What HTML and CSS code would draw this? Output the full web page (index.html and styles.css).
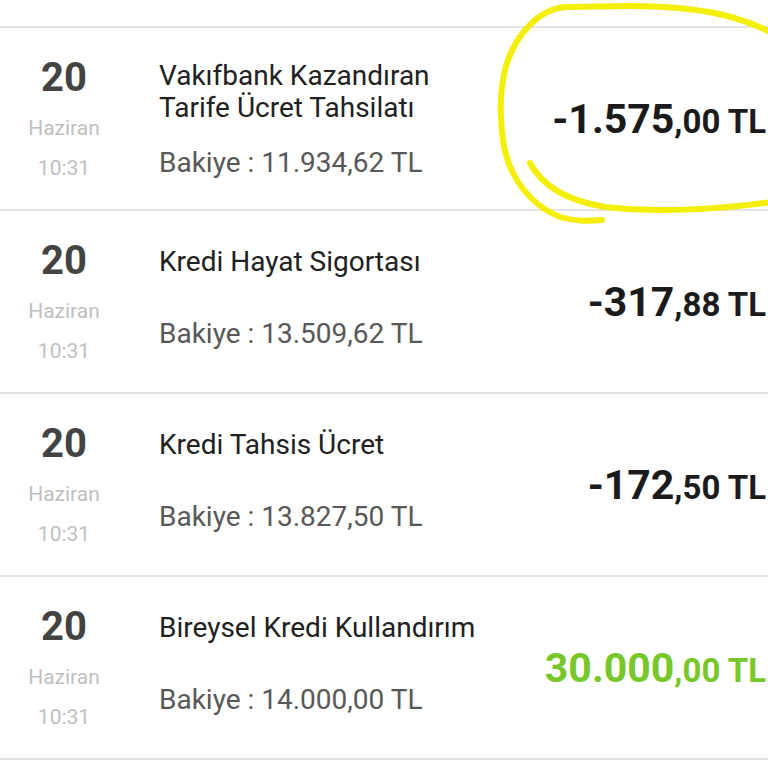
FILE: index.html
```html
<!DOCTYPE html>
<html>
<head>
    <title>Hesap Hareketleri</title>
    <link rel="stylesheet" href="styles.css">
</head>
<body>

<div class="list">
    <div class="row">
        <div class="date">
            <div class="day">20</div>
            <div class="month">Haziran</div>
            <div class="time">10:31</div>
        </div>
        <div class="info double">
            <div class="title">Vakıfbank Kazandıran<br>Tarife Ücret Tahsilatı</div>
            <div class="balance">Bakiye : 11.934,62 TL</div>
        </div>
        <div class="amount">-1.575<span class="cents">,00 TL</span></div>
    </div>

    <div class="row">
        <div class="date">
            <div class="day">20</div>
            <div class="month">Haziran</div>
            <div class="time">10:31</div>
        </div>
        <div class="info">
            <div class="title">Kredi Hayat Sigortası</div>
            <div class="balance">Bakiye : 13.509,62 TL</div>
        </div>
        <div class="amount">-317<span class="cents">,88 TL</span></div>
    </div>

    <div class="row">
        <div class="date">
            <div class="day">20</div>
            <div class="month">Haziran</div>
            <div class="time">10:31</div>
        </div>
        <div class="info">
            <div class="title">Kredi Tahsis Ücret</div>
            <div class="balance">Bakiye : 13.827,50 TL</div>
        </div>
        <div class="amount">-172<span class="cents">,50 TL</span></div>
    </div>

    <div class="row">
        <div class="date">
            <div class="day">20</div>
            <div class="month">Haziran</div>
            <div class="time">10:31</div>
        </div>
        <div class="info">
            <div class="title">Bireysel Kredi Kullandırım</div>
            <div class="balance">Bakiye : 14.000,00 TL</div>
        </div>
        <div class="amount income">30.000<span class="cents">,00 TL</span></div>
    </div>
</div>

<!-- hand-drawn highlight over the first amount -->
<svg class="scribble" width="768" height="240" viewBox="0 0 768 240">
    <path d="M 778 36 C 745 18, 705 6, 630 6 L 565 7 C 540 9, 516 33, 506 66 C 499 92, 500 122, 504 146 C 510 178, 530 205, 560 217 C 576 222, 590 221, 602 220"/>
    <path d="M 530 163 C 541 184, 563 200, 605 207 C 650 212, 715 211, 778 201"/>
</svg>

</body>
</html>
```

FILE: styles.css
```css
:root {
    --line-color: #e3e3e3;
    --title-color: #212121;
    --balance-color: #585858;
    --muted-color: #c0c0c0;
    --green: #77c72b;
}

body {
    margin: 0;
    padding: 0;
    background: #fff;
    font-family: Roboto, "Liberation Sans", sans-serif;
    overflow: hidden;
    position: relative;
    height: 768px;
}

.list {
    width: 768px;
    margin-top: 26px;
    border-top: 2px solid var(--line-color);
}

.row {
    display: flex;
    height: 181px;
    border-bottom: 2px solid var(--line-color);
}

.date {
    width: 128px;
    flex-shrink: 0;
    text-align: center;
    padding-top: 26px;
}

.day {
    font-size: 40px;
    font-weight: 700;
    line-height: 48px;
    color: #434343;
}

.month {
    margin-top: 6px;
    font-size: 21px;
    line-height: 40px;
    color: var(--muted-color);
}

.time {
    font-size: 21px;
    line-height: 40px;
    color: var(--muted-color);
}

.info {
    flex: 1;
    margin-left: 31px;
    padding-top: 35px;
}

.info.double {
    padding-top: 32px;
}

.title {
    font-size: 28px;
    line-height: 32px;
    color: var(--title-color);
}

.balance {
    margin-top: 40px;
    font-size: 28px;
    line-height: 32px;
    color: var(--balance-color);
}

.info.double .balance {
    margin-top: 23px;
}

.amount {
    display: flex;
    align-items: baseline;
    align-self: center;
    padding-right: 2px;
    font-size: 41px;
    font-weight: 700;
    color: #1b1b1b;
    white-space: pre;
}

.amount .cents {
    font-size: 33px;
}

.amount.income {
    color: var(--green);
}

.scribble {
    position: absolute;
    top: 0;
    left: 0;
    pointer-events: none;
}

.scribble path {
    fill: none;
    stroke: #f3ef06;
    stroke-width: 6;
    stroke-linecap: round;
    stroke-linejoin: round;
}
```
